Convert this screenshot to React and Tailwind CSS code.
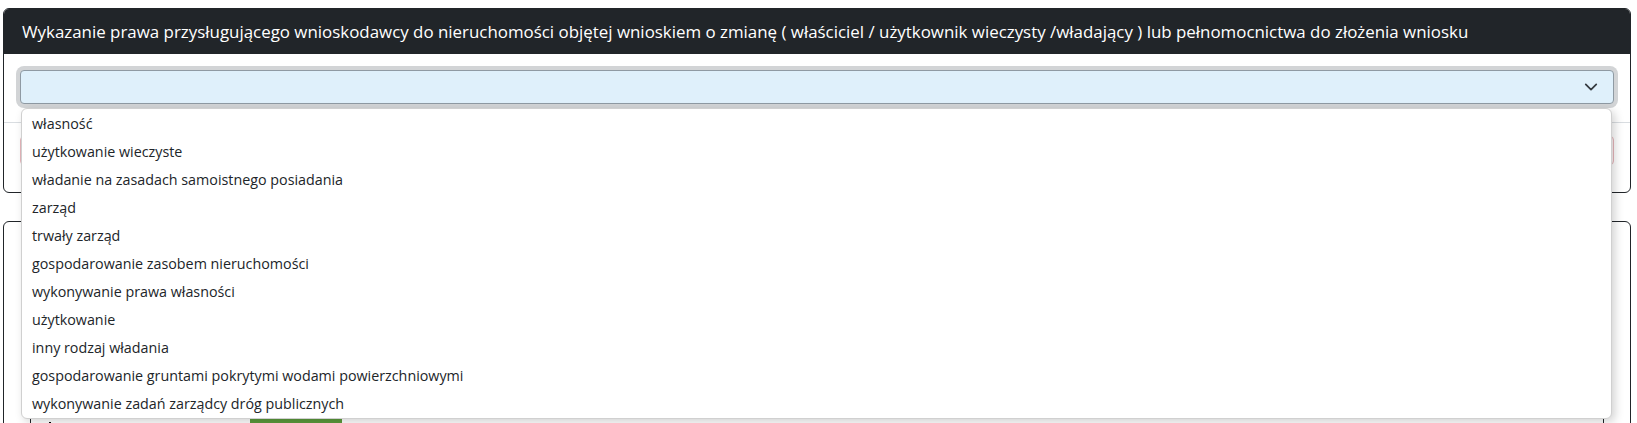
import React from 'react';

const options = [
  'własność',
  'użytkowanie wieczyste',
  'władanie na zasadach samoistnego posiadania',
  'zarząd',
  'trwały zarząd',
  'gospodarowanie zasobem nieruchomości',
  'wykonywanie prawa własności',
  'użytkowanie',
  'inny rodzaj władania',
  'gospodarowanie gruntami pokrytymi wodami powierzchniowymi',
  'wykonywanie zadań zarządcy dróg publicznych',
];

function Chevron() {
  return (
    <svg width="14" height="14" viewBox="0 0 16 16" fill="none" stroke="#343a40" strokeWidth="2" strokeLinecap="round" strokeLinejoin="round">
      <path d="M2 5l6 6 6-6" />
    </svg>
  );
}

export default function App() {
  return (
    <div className="h-[423px] w-full overflow-hidden bg-white pt-[8px] pl-[3px] text-[#212529]" style={{ fontFamily: '"Open Sans", "Noto Sans", sans-serif' }}>
      {/* card: tytuł prawny */}
      <div className="w-[1628px] rounded-[6px] border border-[#212529]">
        <div className="flex h-[45px] items-center rounded-t-[5px] bg-[#212529] px-[18px] text-[16.9px] text-white">
          Wykazanie prawa przysługującego wnioskodawcy do nieruchomości objętej wnioskiem o zmianę ( właściciel / użytkownik wieczysty /władający ) lub pełnomocnictwa do złożenia wniosku
        </div>
        <div className="px-[16px] pt-[16px] pb-[27px]">
          <div className="relative z-10">
            <div className="flex h-[34px] items-center justify-end rounded-[4px] border border-[#8f9aa3] bg-[#dff0fb] pr-[15px] shadow-[0_0_0_4px_#d2d4d6]">
              <Chevron />
            </div>
            {/* otwarta lista */}
            <div className="absolute left-[1px] top-[38px] w-[1591px] rounded-[6px] border border-[#d0d0d0] bg-white pt-[1px] shadow-[3px_3px_10px_rgba(0,0,0,0.18)]">
              {options.map((opt) => (
                <div key={opt} className="flex h-[28px] items-center px-[10px] text-[14.3px] leading-none">
                  {opt}
                </div>
              ))}
            </div>
          </div>
          <div className="mt-[18px] -mx-[16px] border-t border-[#d9dde1]" />
          <div className="mt-[13px] h-[29px] rounded-[4px] border border-[#e7b7bc] bg-[#fdf3f4]" />
        </div>
      </div>

      {/* card: załączniki */}
      <div className="mt-[28px] h-[260px] w-[1628px] rounded-[6px] border border-[#212529] px-[26px] pt-[30px]">
        <div className="h-[200px] border border-[#212529] px-[18px] pt-[163px]">
          <div className="flex items-center gap-[25px] text-[14px]">
            <span className="border-l-2 border-black pl-[4px]">Wybierz plik do załączenia</span>
            <button className="rounded-[3px] bg-[#5c9a3c] px-[20px] py-[6px] text-white">Wybierz</button>
          </div>
        </div>
      </div>
    </div>
  );
}
